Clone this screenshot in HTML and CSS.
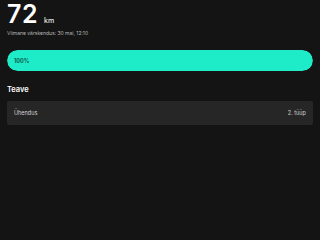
FILE: index.html
```html
<!DOCTYPE html>
<html>
<head>
    <title>Laadimine</title>
    <link rel="stylesheet" href="styles.css">
</head>
<body>
    <div class="screen">
        <div class="range">
            <span class="range-value">72</span>
            <span class="range-unit">km</span>
        </div>
        <div class="updated">Viimane värskendus: 30 mai, 12:10</div>

        <div class="charge-bar">
            <div class="charge-fill" style="width: 100%;">
                <span class="charge-label">100%</span>
            </div>
        </div>

        <h2 class="section-title">Teave</h2>
        <div class="info-card">
            <div class="info-row">
                <span class="info-name">Ühendus</span>
                <span class="info-value">2. tüüp</span>
            </div>
        </div>
    </div>
</body>
</html>
```

FILE: styles.css
```css
body {
    margin: 0;
    background: #141414;
    font-family: Inter, 'Noto Sans', sans-serif;
    color: #ffffff;
    width: 320px;
    height: 240px;
    overflow: hidden;
}

.screen {
    padding: 0 7px;
}

.range {
    display: flex;
    align-items: baseline;
    height: 28px;
}

.range-value {
    font-size: 25px;
    font-weight: 600;
    line-height: 29px;
    letter-spacing: 0.5px;
}

.range-unit {
    font-size: 7px;
    font-weight: 500;
    color: #e8e8e8;
    margin-left: 6px;
}

.updated {
    font-size: 5px;
    color: #b8b8b8;
    margin-top: 2px;
    line-height: 6px;
}

.charge-bar {
    margin-top: 14px;
    height: 21px;
    border-radius: 11px;
    background: #2a2a2a;
    overflow: hidden;
}

.charge-fill {
    height: 100%;
    background: #1eebc7;
    border-radius: 11px;
    display: flex;
    align-items: center;
}

.charge-label {
    font-size: 5.5px;
    font-weight: 700;
    color: #0f5c50;
    margin-left: 7px;
}

.section-title {
    margin: 14px 0 0;
    font-size: 7.5px;
    font-weight: 600;
    line-height: 9px;
}

.info-card {
    margin-top: 7px;
    background: #262626;
    border-radius: 2px;
}

.info-row {
    display: flex;
    justify-content: space-between;
    align-items: center;
    height: 24px;
    padding: 0 7px;
    font-size: 5.5px;
    color: #d4d4d4;
}
```
